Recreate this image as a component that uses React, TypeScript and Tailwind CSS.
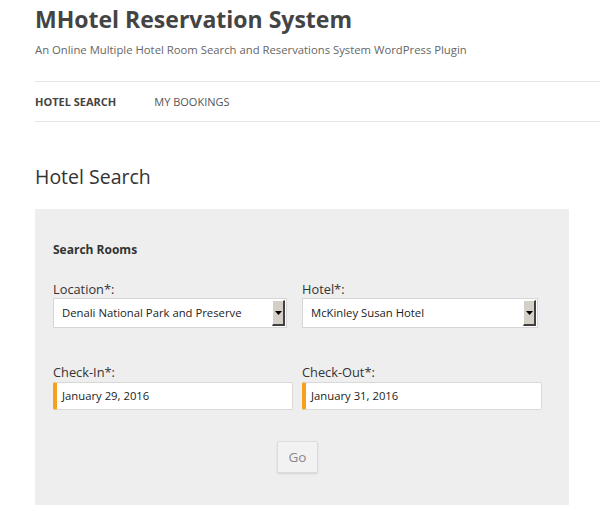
import React from "react";

function SelectBox({ value, width }: { value: string; width: string }) {
  return (
    <div className={`flex h-[30px] ${width} items-stretch border border-[#d6d6d6] bg-white`}>
      <div className="flex flex-1 items-center pl-[8px] text-[11.3px] text-[#222]">{value}</div>
      <div className="my-[1px] mr-[1px] flex w-[13px] items-center justify-center border-b-2 border-r-2 border-l border-t border-b-[#404040] border-r-[#404040] border-l-white border-t-white bg-[#d4d0c8]">
        <svg width="7" height="4" viewBox="0 0 7 4">
          <path d="M0 0h7L3.5 4z" fill="#000" />
        </svg>
      </div>
    </div>
  );
}

function DateInput({ value }: { value: string }) {
  return (
    <div className="flex h-[28px] w-[240px] items-center rounded-[2px] border border-[#d9d9d9] border-l-[4px] border-l-[#f7a01d] bg-white pl-[5px] pt-[1px] text-[11.3px] text-[#222]">
      {value}
    </div>
  );
}

export default function App() {
  return (
    <div className="min-h-[522px] w-[600px] bg-white font-['Open_Sans',sans-serif] text-[#333]">
      <div className="pl-[35px]">
        <h1 className="pt-[3px] text-[23px] font-bold leading-[32px] text-[#444]">MHotel Reservation System</h1>
        <p className="mt-[6px] text-[11.3px] leading-[18px] text-[#666]">
          An Online Multiple Hotel Room Search and Reservations System WordPress Plugin
        </p>
        <div className="mt-[22px] border-t border-[#e4e4e4]" />
        <nav className="flex h-[39px] items-center gap-[38px] pt-[2px] text-[11px] uppercase text-[#555]">
          <span className="font-bold text-[#444]">Hotel Search</span>
          <span>My Bookings</span>
        </nav>
        <div className="border-t border-[#e4e4e4]" />
        <h2 className="mt-[43px] text-[19.5px] leading-[24px] text-[#333]">Hotel Search</h2>
        <div className="mt-[20px] h-[296px] w-[534px] bg-[#eeeeee] px-[18px] pt-[32px]">
          <div className="text-[12px] font-bold text-[#333]">Search Rooms</div>
          <div className="mt-[21px] flex gap-[15px]">
            <div>
              <div className="text-[12.8px] leading-[18px] text-[#333]">Location*:</div>
              <SelectBox value="Denali National Park and Preserve" width="w-[234px]" />
            </div>
            <div>
              <div className="text-[12.8px] leading-[18px] text-[#333]">Hotel*:</div>
              <SelectBox value="McKinley Susan Hotel" width="w-[236px]" />
            </div>
          </div>
          <div className="mt-[35px] flex gap-[9px]">
            <div>
              <div className="mb-[1px] text-[12.8px] leading-[18px] text-[#333]">Check-In*:</div>
              <DateInput value="January 29, 2016" />
            </div>
            <div>
              <div className="mb-[1px] text-[12.8px] leading-[18px] text-[#333]">Check-Out*:</div>
              <DateInput value="January 31, 2016" />
            </div>
          </div>
          <div className="mt-[31px] flex justify-center pr-[9px]">
            <button className="flex h-[32px] w-[41px] items-center justify-center rounded-[2px] border border-[#dcdcdc] bg-[#f2f2f2] text-[13.5px] text-[#888] shadow-[0_1px_2px_rgba(0,0,0,0.12)]">
              Go
            </button>
          </div>
        </div>
      </div>
    </div>
  );
}
